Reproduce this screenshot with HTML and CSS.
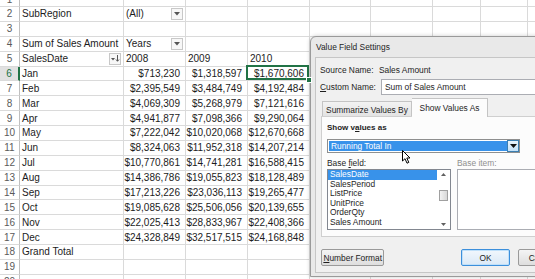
FILE: index.html
```html
<!DOCTYPE html>
<html lang="en">
<head>
  <meta charset="UTF-8">
  <meta name="viewport" content="width=device-width, initial-scale=1.0">
  <link rel="stylesheet" href="styles.css">
</head>
<body>
  <div class="sheet">
    <div class="r"><div class="rh">1</div><div class="c"></div><div class="c"></div><div class="c"></div><div class="c"></div><div class="c"></div><div class="c"></div><div class="c"></div><div class="c"></div><div class="c"></div></div>
    <div class="r"><div class="rh">2</div><div class="c">SubRegion</div><div class="c">(All)<span class="dd"><svg width="6" height="4" viewBox="0 0 6 4"><path d="M0 0h6L3 3.5z" fill="#555"/></svg></span></div><div class="c"></div><div class="c"></div><div class="c"></div><div class="c"></div><div class="c"></div><div class="c"></div><div class="c"></div></div>
    <div class="r"><div class="rh">3</div><div class="c"></div><div class="c"></div><div class="c"></div><div class="c"></div><div class="c"></div><div class="c"></div><div class="c"></div><div class="c"></div><div class="c"></div></div>
    <div class="r"><div class="rh">4</div><div class="c">Sum of Sales Amount</div><div class="c">Years<span class="dd"><svg width="6" height="4" viewBox="0 0 6 4"><path d="M0 0h6L3 3.5z" fill="#555"/></svg></span></div><div class="c"></div><div class="c"></div><div class="c"></div><div class="c"></div><div class="c"></div><div class="c"></div><div class="c"></div></div>
    <div class="r"><div class="rh">5</div><div class="c">SalesDate<span class="dd"><svg width="9" height="7" viewBox="0 0 9 7"><path d="M0 3h4L2 5.5z" fill="#555"/><path d="M6.5 0v6M5 4.5l1.5 1.8L8 4.5" stroke="#555" fill="none"/></svg></span></div><div class="c">2008</div><div class="c">2009</div><div class="c">2010</div><div class="c"></div><div class="c"></div><div class="c"></div><div class="c"></div><div class="c"></div></div>
    <div class="r"><div class="rh rh-sel">6</div><div class="c">Jan</div><div class="c n">$713,230</div><div class="c n">$1,318,597</div><div class="c n act">$1,670,606</div><div class="c"></div><div class="c"></div><div class="c"></div><div class="c"></div><div class="c"></div></div>
    <div class="r"><div class="rh">7</div><div class="c">Feb</div><div class="c n">$2,395,549</div><div class="c n">$3,484,749</div><div class="c n">$4,192,484</div><div class="c"></div><div class="c"></div><div class="c"></div><div class="c"></div><div class="c"></div></div>
    <div class="r"><div class="rh">8</div><div class="c">Mar</div><div class="c n">$4,069,309</div><div class="c n">$5,268,979</div><div class="c n">$7,121,616</div><div class="c"></div><div class="c"></div><div class="c"></div><div class="c"></div><div class="c"></div></div>
    <div class="r"><div class="rh">9</div><div class="c">Apr</div><div class="c n">$4,941,877</div><div class="c n">$7,098,366</div><div class="c n">$9,290,064</div><div class="c"></div><div class="c"></div><div class="c"></div><div class="c"></div><div class="c"></div></div>
    <div class="r"><div class="rh">10</div><div class="c">May</div><div class="c n">$7,222,042</div><div class="c n">$10,020,068</div><div class="c n">$12,670,668</div><div class="c"></div><div class="c"></div><div class="c"></div><div class="c"></div><div class="c"></div></div>
    <div class="r"><div class="rh">11</div><div class="c">Jun</div><div class="c n">$8,324,063</div><div class="c n">$11,952,318</div><div class="c n">$14,207,214</div><div class="c"></div><div class="c"></div><div class="c"></div><div class="c"></div><div class="c"></div></div>
    <div class="r"><div class="rh">12</div><div class="c">Jul</div><div class="c n">$10,770,861</div><div class="c n">$14,741,281</div><div class="c n">$16,588,415</div><div class="c"></div><div class="c"></div><div class="c"></div><div class="c"></div><div class="c"></div></div>
    <div class="r"><div class="rh">13</div><div class="c">Aug</div><div class="c n">$14,386,786</div><div class="c n">$19,055,823</div><div class="c n">$18,128,489</div><div class="c"></div><div class="c"></div><div class="c"></div><div class="c"></div><div class="c"></div></div>
    <div class="r"><div class="rh">14</div><div class="c">Sep</div><div class="c n">$17,213,226</div><div class="c n">$23,036,113</div><div class="c n">$19,265,477</div><div class="c"></div><div class="c"></div><div class="c"></div><div class="c"></div><div class="c"></div></div>
    <div class="r"><div class="rh">15</div><div class="c">Oct</div><div class="c n">$19,085,628</div><div class="c n">$25,506,056</div><div class="c n">$20,139,655</div><div class="c"></div><div class="c"></div><div class="c"></div><div class="c"></div><div class="c"></div></div>
    <div class="r"><div class="rh">16</div><div class="c">Nov</div><div class="c n">$22,025,413</div><div class="c n">$28,833,967</div><div class="c n">$22,408,366</div><div class="c"></div><div class="c"></div><div class="c"></div><div class="c"></div><div class="c"></div></div>
    <div class="r"><div class="rh">17</div><div class="c">Dec</div><div class="c n">$24,328,849</div><div class="c n">$32,517,515</div><div class="c n">$24,168,848</div><div class="c"></div><div class="c"></div><div class="c"></div><div class="c"></div><div class="c"></div></div>
    <div class="r"><div class="rh">18</div><div class="c">Grand Total</div><div class="c"></div><div class="c"></div><div class="c"></div><div class="c"></div><div class="c"></div><div class="c"></div><div class="c"></div><div class="c"></div></div>
    <div class="r"><div class="rh">19</div><div class="c"></div><div class="c"></div><div class="c"></div><div class="c"></div><div class="c"></div><div class="c"></div><div class="c"></div><div class="c"></div><div class="c"></div></div>
    <div class="r"><div class="rh">20</div><div class="c"></div><div class="c"></div><div class="c"></div><div class="c"></div><div class="c"></div><div class="c"></div><div class="c"></div><div class="c"></div><div class="c"></div></div>
  </div>

  <div class="dialog">
    <div class="dlg-title">Value Field Settings</div>
    <div class="dlg-body">
      <div class="dlg-row"><span class="dlg-lbl">Source Name:</span><span>Sales Amount</span></div>
      <div class="dlg-row dlg-row-input"><span class="dlg-lbl"><u>C</u>ustom Name:</span><span class="dlg-input">Sum of Sales Amount</span></div>
      <div class="tabs">
        <span class="tab">Summarize Values By</span>
        <span class="tab tab-on">Show Values As</span>
      </div>
      <div class="tab-panel">
        <div class="group-lbl">Show v<u>a</u>lues as</div>
        <div class="combo">
          <span class="combo-val">Running Total In</span>
          <span class="combo-btn"><svg width="7" height="4" viewBox="0 0 7 4"><path d="M0 0h7L3.5 4z" fill="#111"/></svg></span>
        </div>
        <div class="base">
          <div class="base-col">
            <div class="base-lbl">Base <u>f</u>ield:</div>
            <div class="list">
              <div class="list-items">
                <div class="item item-on">SalesDate</div>
                <div class="item">SalesPeriod</div>
                <div class="item">ListPrice</div>
                <div class="item">UnitPrice</div>
                <div class="item">OrderQty</div>
                <div class="item">Sales Amount</div>
              </div>
              <div class="scroll">
                <svg width="5" height="3" viewBox="0 0 5 3"><path d="M0 3h5L2.5 0z" fill="#606060"/></svg>
                <span class="thumb"></span>
                <svg width="5" height="3" viewBox="0 0 5 3"><path d="M0 0h5L2.5 3z" fill="#606060"/></svg>
              </div>
            </div>
          </div>
          <div class="base-col">
            <div class="base-lbl dim">Base item:</div>
            <div class="list list-empty"></div>
          </div>
        </div>
      </div>
      <div class="dlg-buttons">
        <span class="btn btn-wide"><u>N</u>umber Format</span>
        <span class="btn btn-ok">OK</span>
        <span class="btn">Cancel</span>
      </div>
    </div>
    <svg class="cursor" width="9" height="14" viewBox="0 0 9 14"><path d="M0.5 0.5V11L3 8.7L5 13.2L6.8 12.4L4.8 8H8z" fill="#fff" stroke="#000" stroke-width="1" stroke-linejoin="round"/></svg>
  </div>
</body>
</html>
```

FILE: styles.css
```css
body {
  margin: 0;
  width: 535px;
  height: 279px;
  overflow: hidden;
  position: relative;
  background-color: #fff;
  font-family: "Liberation Sans", Arial, sans-serif;
  color: #1c1c1c;
}

.sheet {
  display: grid;
  grid-template-columns: 20px 104px 62px 62px 62px 61px 62px 48px 47px 60px;
  grid-auto-rows: 14.88px;
  margin-top: -7.88px;
  font-size: 10px;
}

.r {
  display: contents;
}

.rh,
.c {
  box-sizing: border-box;
  display: flex;
  align-items: center;
  white-space: nowrap;
  border-bottom: 1px solid #dadada;
  border-right: 1px solid #dadada;
}

.rh {
  justify-content: center;
  color: #5a5a5a;
  background-color: #fff;
  border-right-color: #bfbfbf;
}

.rh-sel {
  background-color: #e1e1e1;
  color: #217346;
  border-right: 2px solid #217346;
}

.c {
  padding: 0 2px;
}

.n {
  justify-content: flex-end;
  padding-right: 5px;
}

.act {
  position: relative;
}

.act::after {
  content: "";
  position: absolute;
  left: -2px;
  top: -2px;
  right: 0;
  bottom: 0;
  border: 2px solid #217346;
}

.act::before {
  content: "";
  position: absolute;
  right: -3px;
  bottom: -3px;
  width: 4px;
  height: 4px;
  background-color: #217346;
  border: 1px solid #fff;
  z-index: 1;
}

.dd {
  margin-left: auto;
  width: 12px;
  height: 12px;
  box-sizing: border-box;
  border: 1px solid #c8c8c8;
  background-color: #f7f7f7;
  display: flex;
  align-items: center;
  justify-content: center;
}

/* dialog */

.dialog {
  position: absolute;
  left: 310px;
  top: 36px;
  width: 262px;
  height: 241px;
  box-sizing: border-box;
  display: flex;
  flex-direction: column;
  background-color: #e9e9e9;
  border: 1px solid #9a9a9a;
  border-radius: 6px 6px 0 0;
  box-shadow: 0 0 4px rgba(0, 0, 0, 0.2);
  font-size: 8.4px;
  color: #1e1e1e;
}

.dlg-title {
  height: 20px;
  line-height: 20px;
  padding-left: 5px;
}

.dlg-body {
  flex: 1;
  margin: 0 4px 3px 4px;
  padding: 5px 0 0 4px;
  background-color: #f0f0f0;
  border: 1px solid #c6c6c6;
  display: flex;
  flex-direction: column;
  overflow: hidden;
}

.dlg-row {
  display: flex;
  align-items: center;
  height: 13px;
}

.dlg-row-input {
  height: 16px;
  margin-top: 3px;
}

.dlg-lbl {
  width: 59px;
  flex-shrink: 0;
}

.dlg-input {
  flex: 1;
  height: 16px;
  box-sizing: border-box;
  margin-left: 2px;
  padding-left: 3px;
  display: flex;
  align-items: center;
  background-color: #fff;
  border: 1px solid #abadb3;
}

.tabs {
  display: flex;
  align-items: flex-end;
  height: 19px;
  margin-top: 3px;
  padding-left: 2px;
}

.tab {
  box-sizing: border-box;
  width: 90px;
  height: 16px;
  display: flex;
  align-items: center;
  justify-content: center;
  background: linear-gradient(#f3f3f3, #e2e2e2);
  border: 1px solid #c4c4c4;
  border-bottom: none;
}

.tab-on {
  width: 76px;
  height: 19px;
  background: #fcfcfc;
  border-left: none;
  position: relative;
  z-index: 1;
}

.tab-panel {
  height: 121px;
  box-sizing: border-box;
  margin: -1px 0 0 1px;
  padding: 6px 0 0 5px;
  background-color: #fcfcfc;
  border: 1px solid #cfcfcf;
}

.group-lbl {
  height: 10px;
  line-height: 10px;
  font-weight: bold;
  font-size: 8px;
}

.combo {
  width: 193px;
  height: 14px;
  box-sizing: border-box;
  margin-top: 6px;
  display: flex;
  border: 1px solid #8e8f8f;
  background-color: #fff;
  padding: 1px 0 1px 1px;
}

.combo-val {
  flex: 1;
  display: flex;
  align-items: center;
  padding-left: 2px;
  background-color: #3892ea;
  color: #fff;
}

.combo-btn {
  width: 12px;
  margin: -1px 0;
  box-sizing: border-box;
  display: flex;
  align-items: center;
  justify-content: center;
  background: linear-gradient(#e9f4fc, #c5e2f8);
  border: 1px solid #3c7fb1;
}

.base {
  display: flex;
  gap: 6px;
  margin-top: 5px;
}

.base-lbl {
  height: 10px;
  line-height: 10px;
  margin-bottom: 1px;
}

.dim {
  color: #8f8f8f;
}

.list {
  width: 124px;
  height: 61px;
  box-sizing: border-box;
  display: flex;
  background-color: #fff;
  border: 1px solid #828790;
}

.list-empty {
  width: 100px;
  border-color: #abadb3;
}

.list-items {
  flex: 1;
}

.item {
  height: 9.6px;
  line-height: 9.6px;
  padding-left: 2px;
}

.item-on {
  background-color: #3892ea;
  color: #fff;
}

.scroll {
  width: 13px;
  display: flex;
  flex-direction: column;
  align-items: center;
  justify-content: space-between;
  padding: 3px 0;
  box-sizing: border-box;
}

.thumb {
  width: 9px;
  height: 11px;
  margin-top: 14px;
  box-sizing: border-box;
  border: 1px solid #a0a0a0;
  background: linear-gradient(90deg, #f2f2f2, #d8d8d8);
}

.scroll svg:last-child {
  margin-top: auto;
}

.dlg-buttons {
  display: flex;
  gap: 8px;
  margin-top: 12px;
  padding-left: 1px;
}

.btn {
  width: 54px;
  height: 17px;
  box-sizing: border-box;
  display: flex;
  align-items: center;
  justify-content: center;
  background: linear-gradient(#f4f4f4, #dedede);
  border: 1px solid #9a9a9a;
  border-radius: 2px;
}

.btn-wide {
  width: 71px;
  margin-right: 69px;
}

.btn-ok {
  border-color: #3c8fdb;
  box-shadow: inset 0 0 0 1px #bfe0fa;
  background: linear-gradient(#f1f7fd, #dbe9f6);
}

.cursor {
  position: absolute;
  left: 91px;
  top: 113px;
  z-index: 2;
}
```
